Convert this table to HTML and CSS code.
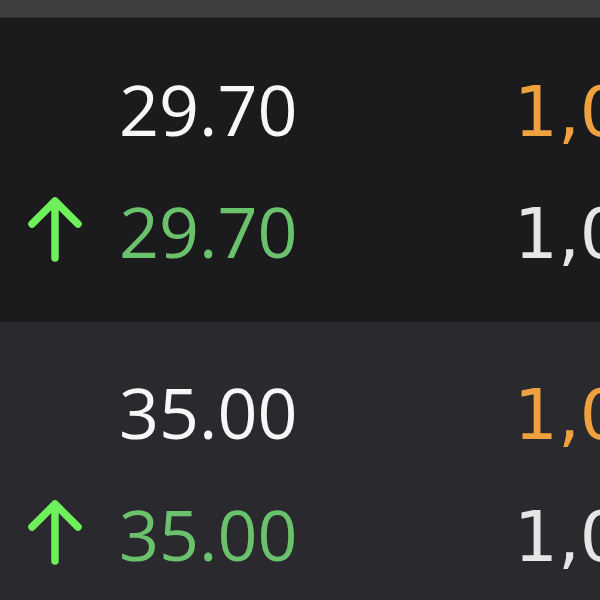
FILE: index.html
```html
<!DOCTYPE html>
<html lang="en">
<head>
    <meta charset="UTF-8">
    <title>Order Book</title>
    <link rel="stylesheet" href="styles.css">
</head>
<body>
    <div class="top-bar"></div>

    <div class="quote-block">
        <div class="quote-row">
            <span class="cell-icon"></span>
            <span class="cell-price">29.70</span>
            <span class="cell-qty qty-ask">1,000</span>
        </div>
        <div class="quote-row">
            <span class="cell-icon">
                <svg class="arrow-up" width="60" height="66" viewBox="0 0 60 66"><path d="M30 62 V5 M7 28 L30 5 L53 28" /></svg>
            </span>
            <span class="cell-price price-up">29.70</span>
            <span class="cell-qty">1,000</span>
        </div>
    </div>

    <div class="quote-block alt">
        <div class="quote-row">
            <span class="cell-icon"></span>
            <span class="cell-price">35.00</span>
            <span class="cell-qty qty-ask">1,000</span>
        </div>
        <div class="quote-row">
            <span class="cell-icon">
                <svg class="arrow-up" width="60" height="66" viewBox="0 0 60 66"><path d="M30 62 V5 M7 28 L30 5 L53 28" /></svg>
            </span>
            <span class="cell-price price-up">35.00</span>
            <span class="cell-qty">1,000</span>
        </div>
    </div>
</body>
</html>
```

FILE: styles.css
```css
html, body {
    margin: 0;
    padding: 0;
    background-color: #1b1b1d;
    overflow: hidden;
}
body {
    width: 600px;
    height: 600px;
}
.top-bar {
    height: 17px;
    background-color: #3e3e40;
    border-bottom: 1px solid #2c2c2e;
}
.quote-block {
    background-color: #1b1b1d;
    padding: 30px 0 29px;
    height: 244px;
    border-bottom: 1px solid #202022;
}
.quote-block.alt {
    background-color: #29292e;
    padding-top: 29px;
    border-bottom: none;
}
.quote-row {
    display: flex;
    align-items: baseline;
    height: 122px;
    line-height: 122px;
    white-space: nowrap;
    overflow: hidden;
}
.cell-icon {
    width: 94px;
    padding-left: 25px;
    flex-shrink: 0;
}
.arrow-up {
    vertical-align: -4px;
}
.arrow-up path {
    fill: none;
    stroke: #6ef05a;
    stroke-width: 7.5;
    stroke-linecap: round;
    stroke-linejoin: round;
}
.cell-price {
    width: 395px;
    flex-shrink: 0;
    font-family: "Open Sans", sans-serif;
    font-size: 70px;
    color: #f7f7f7;
}
.cell-price.price-up {
    color: #6bc26c;
}
.cell-qty {
    flex-shrink: 0;
    font-family: "DejaVu Sans", sans-serif;
    font-size: 69px;
    color: #e6e6e6;
}
.cell-qty.qty-ask {
    color: #efa13f;
}
```
